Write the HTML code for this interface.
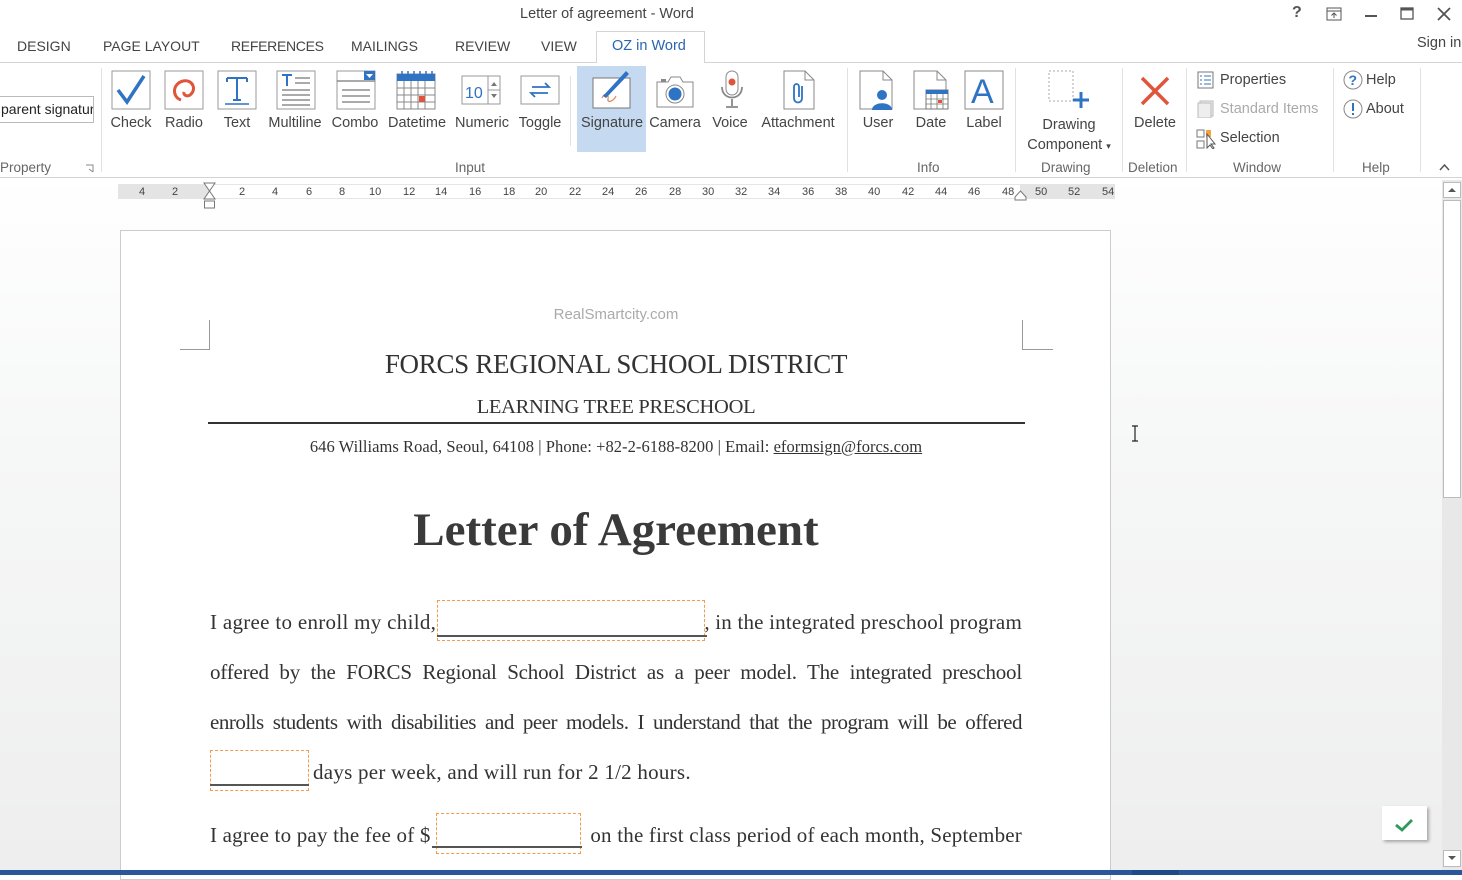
<!DOCTYPE html>
<html><head><meta charset="utf-8"><style>
*{margin:0;padding:0;box-sizing:border-box}
body{width:1462px;height:875px;overflow:hidden;position:relative;background:#fff;font-family:"Liberation Sans",sans-serif;color:#444}
.a{position:absolute;white-space:nowrap}
.tab{position:absolute;top:38px;font-size:14px;color:#444}
.lbl{position:absolute;top:115px;font-size:14.5px;color:#444;text-align:center}
.grp{position:absolute;top:160px;font-size:13.5px;color:#666}
.sep{position:absolute;top:68px;width:1px;height:104px;background:#e1e1e1}
.ic{position:absolute;top:70px}
.rn{position:absolute;top:186px;font-size:11px;color:#444}
.serif{font-family:"Liberation Serif",serif;color:#333}
.ln{position:absolute;left:210px;width:812px;font-family:"Liberation Serif",serif;font-size:21px;color:#333;text-align:justify;text-align-last:justify;white-space:nowrap;letter-spacing:-0.2px}
.pc{position:absolute;font-family:"Liberation Serif",serif;font-size:21px;color:#333;white-space:nowrap;letter-spacing:-0.2px}
.fld{position:absolute;border:1.5px dashed #f39a4c}
.ul{position:absolute;height:1.5px;background:#555}
</style></head><body>
<div class="a" style="left:520px;top:6px;font-size:14.5px;color:#444">Letter of agreement - Word</div>
<div class="a" style="left:1292px;top:4px;font-size:16px;font-weight:bold;color:#555">?</div>
<svg class="a" style="left:1326px;top:7px" width="16" height="14"><rect x="1" y="1" width="14" height="12" fill="none" stroke="#555"/><path d="M1 4H15M8 11V6M5.5 8.5L8 6L10.5 8.5" stroke="#555" fill="none"/></svg>
<div class="a" style="left:1365px;top:15px;width:12px;height:2px;background:#555"></div>
<svg class="a" style="left:1400px;top:7px" width="14" height="13"><rect x="1" y="1" width="12" height="11" fill="none" stroke="#555" stroke-width="1.3"/><rect x="1" y="1" width="12" height="2.5" fill="#555"/></svg>
<svg class="a" style="left:1437px;top:7px" width="14" height="14"><path d="M1 1L13 13M13 1L1 13" stroke="#555" stroke-width="1.8"/></svg>

<div class="tab" style="left:17px">DESIGN</div>
<div class="tab" style="left:103px">PAGE LAYOUT</div>
<div class="tab" style="left:231px;letter-spacing:-0.3px">REFERENCES</div>
<div class="tab" style="left:351px">MAILINGS</div>
<div class="tab" style="left:455px">REVIEW</div>
<div class="tab" style="left:541px">VIEW</div>
<div class="a" style="left:596px;top:31px;width:109px;height:32px;border:1px solid #d4d4d4;border-bottom:none;background:#fff;z-index:2"></div>
<div class="tab" style="left:612px;color:#2b64b3;z-index:3;font-size:14.5px">OZ in Word</div>
<div class="a" style="left:1417px;top:35px;font-size:14.5px;color:#444">Sign in</div>
<div class="a" style="left:0;top:62px;width:1462px;height:1px;background:#d4d4d4"></div>
<div class="a" style="left:0;top:177px;width:1462px;height:1px;background:#d4d4d4"></div>

<div class="a" style="left:-2px;top:96px;width:96px;height:27px;border:1px solid #bbb;font-size:14px;color:#222;padding:4px 2px;overflow:hidden">parent signature</div>
<div class="grp" style="left:0">Property</div>
<svg class="a" style="left:85px;top:164px" width="9" height="9"><path d="M1 1H8V8M4 5L8 8" stroke="#888" fill="none"/></svg>
<div class="sep" style="left:101px"></div>

<div class="a" style="left:577px;top:66px;width:69px;height:86px;background:#c5d9f1"></div>

<svg class="ic" style="left:111px" width="40" height="40"><rect x="1" y="1" width="38" height="38" fill="#fff" stroke="#999"/><path d="M7 20L16 32L33 6" stroke="#2f73c4" stroke-width="3.5" fill="none"/></svg>
<svg class="ic" style="left:164px" width="40" height="40"><rect x="1" y="1" width="38" height="38" fill="#fff" stroke="#999"/><path d="M17 30C8 27 8 14 19 11C29 9 33 20 26 25C23 27 19 25 20 22" stroke="#e0553a" stroke-width="3" fill="none"/></svg>
<svg class="ic" style="left:217px" width="40" height="40"><rect x="1" y="1" width="38" height="38" fill="#fff" stroke="#999"/><path d="M10 8H30M20 8V30M16 30H24M10 8V12M30 8V12" stroke="#2f73c4" stroke-width="2" fill="none"/><path d="M8 34H32" stroke="#2f73c4" stroke-width="1.5"/></svg>
<svg class="ic" style="left:276px" width="40" height="40"><rect x="1" y="1" width="38" height="38" fill="#fff" stroke="#999"/><path d="M6 5H16M11 5V16" stroke="#2f73c4" stroke-width="2"/><path d="M19 8H34M19 13H34M6 20H34M6 25H34M6 30H34M6 35H34" stroke="#777" stroke-width="1.3"/></svg>
<svg class="ic" style="left:336px" width="40" height="40"><rect x="1" y="1" width="38" height="38" fill="#fff" stroke="#999"/><rect x="28" y="1" width="11" height="9" fill="#2f73c4"/><path d="M30 4L33.5 8L37 4Z" fill="#fff"/><path d="M1 11H39M6 20H34M6 26H34M6 32H34" stroke="#777" stroke-width="1.3"/></svg>
<svg class="ic" style="left:396px" width="40" height="40"><rect x="1" y="4" width="38" height="35" fill="#fff" stroke="#888"/><rect x="1" y="4" width="38" height="7" fill="#2f73c4"/><path d="M6 1V7M12 1V7M18 1V7M24 1V7M30 1V7M36 1V7" stroke="#2f73c4" stroke-width="1.5"/><path d="M1 18H39M1 25H39M1 32H39M8 11V39M15 11V39M22 11V39M29 11V39" stroke="#888"/><rect x="23" y="26" width="6" height="6" fill="#e0553a"/></svg>
<svg class="ic" style="left:461px" width="40" height="40"><rect x="1" y="6" width="38" height="28" fill="#fff" stroke="#999"/><text x="4" y="28" font-size="16" fill="#2f73c4" font-family="Liberation Sans">10</text><path d="M27 6V34M27 20H39" stroke="#999"/><path d="M30 16L33 12L36 16ZM30 24L33 28L36 24Z" fill="#777"/></svg>
<svg class="ic" style="left:520px" width="40" height="40"><rect x="1" y="6" width="38" height="28" fill="#fff" stroke="#999"/><path d="M12 17H29L25 13M28 23H11L15 27" stroke="#2f73c4" stroke-width="1.8" fill="none"/></svg>
<svg class="ic" style="left:591px" width="42" height="40"><rect x="2" y="8" width="37" height="30" fill="#fff" stroke="#777"/><path d="M11 28C14 22 18 24 17 29C16 33 22 32 25 26" stroke="#e58a5a" stroke-width="1.3" fill="none"/><path d="M12 26L35 1L38 4L15 28Z" fill="#2f73c4"/></svg>
<svg class="ic" style="left:654px" width="42" height="40"><path d="M3 12H14L17 7H26L29 12H39V37H3Z" fill="#fff" stroke="#888"/><rect x="7" y="9" width="5" height="3" fill="#888"/><circle cx="21" cy="24" r="9" fill="#fff" stroke="#888"/><circle cx="21" cy="24" r="6.5" fill="#2f73c4"/></svg>
<svg class="ic" style="left:718px" width="28" height="40"><rect x="8" y="1" width="12" height="24" rx="6" fill="#fff" stroke="#888"/><circle cx="14" cy="12" r="3.5" fill="#e0553a"/><path d="M4 17C4 31 24 31 24 17M14 29V36M8 37H20" stroke="#888" stroke-width="1.8" fill="none"/></svg>
<svg class="ic" style="left:783px" width="32" height="40"><path d="M1 1H22L31 10V39H1Z" fill="#fff" stroke="#888"/><path d="M22 1V10H31" fill="none" stroke="#888"/><path d="M19 16V28C19 34 11 34 11 28V17C11 13 16 13 16 17V27" stroke="#2f73c4" stroke-width="1.8" fill="none"/></svg>
<div class="lbl" style="left:108px;width:46px">Check</div>
<div class="lbl" style="left:161px;width:46px">Radio</div>
<div class="lbl" style="left:214px;width:46px">Text</div>
<div class="lbl" style="left:262px;width:66px">Multiline</div>
<div class="lbl" style="left:327px;width:56px">Combo</div>
<div class="lbl" style="left:384px;width:66px">Datetime</div>
<div class="lbl" style="left:450px;width:64px">Numeric</div>
<div class="lbl" style="left:514px;width:52px">Toggle</div>
<div class="lbl" style="left:578px;width:68px">Signature</div>
<div class="lbl" style="left:646px;width:58px">Camera</div>
<div class="lbl" style="left:706px;width:48px">Voice</div>
<div class="lbl" style="left:756px;width:84px">Attachment</div>
<div class="sep" style="left:570px;top:76px;height:70px"></div>
<div class="grp" style="left:455px">Input</div>
<div class="sep" style="left:847px"></div>

<svg class="ic" style="left:859px" width="36" height="40"><path d="M1 1H24L33 10V39H1Z" fill="#fff" stroke="#888"/><path d="M24 1V10H33" fill="none" stroke="#888"/><circle cx="23" cy="25" r="5" fill="#2f73c4"/><path d="M13 40C13 31 33 31 33 40Z" fill="#2f73c4"/></svg>
<svg class="ic" style="left:913px" width="36" height="40"><path d="M1 1H24L33 10V39H1Z" fill="#fff" stroke="#888"/><path d="M24 1V10H33" fill="none" stroke="#888"/><rect x="13" y="20" width="22" height="19" fill="#fff" stroke="#777"/><rect x="13" y="20" width="22" height="4" fill="#2f73c4"/><path d="M13 29H35M13 34H35M18 24V39M24 24V39M30 24V39" stroke="#777" stroke-width=".8"/><rect x="25" y="30" width="4" height="3" fill="#e0553a"/></svg>
<svg class="ic" style="left:964px" width="40" height="40"><rect x="1" y="1" width="38" height="38" fill="#fff" stroke="#888"/><text x="7" y="33" font-size="34" fill="#2f73c4" font-family="Liberation Sans">A</text></svg>
<div class="lbl" style="left:858px;width:40px">User</div>
<div class="lbl" style="left:910px;width:42px">Date</div>
<div class="lbl" style="left:962px;width:44px">Label</div>
<div class="grp" style="left:917px">Info</div>
<div class="sep" style="left:1015px"></div>

<svg class="ic" style="left:1048px" width="42" height="40"><rect x="1" y="1" width="24" height="30" fill="none" stroke="#aaa" stroke-dasharray="2 2"/><path d="M33 22V38M25 30H41" stroke="#2f73c4" stroke-width="3"/></svg>
<div class="lbl" style="left:1024px;width:90px;line-height:20px">Drawing<br>Component <span style="font-size:9px">▾</span></div>
<div class="grp" style="left:1041px">Drawing</div>
<div class="sep" style="left:1122px"></div>
<svg class="ic" style="left:1140px;top:76px" width="30" height="30"><path d="M2 2L28 28M28 2L2 28" stroke="#e0553a" stroke-width="3.5"/></svg>
<div class="lbl" style="left:1128px;width:54px">Delete</div>
<div class="grp" style="left:1128px">Deletion</div>
<div class="sep" style="left:1186px"></div>

<svg class="a" style="left:1197px;top:71px" width="18" height="18"><rect x="1" y="1" width="15" height="16" fill="#fff" stroke="#777"/><path d="M3 5H5M7 5H14M3 9H5M7 9H14M3 13H5M7 13H14" stroke="#2f73c4"/></svg>
<div class="a" style="left:1220px;top:72px;font-size:14.5px;color:#444">Properties</div>
<svg class="a" style="left:1197px;top:100px" width="18" height="18"><rect x="3" y="1" width="13" height="15" fill="#eee" stroke="#bbb"/><rect x="1" y="3" width="13" height="15" fill="#eee" stroke="#bbb"/></svg>
<div class="a" style="left:1220px;top:101px;font-size:14.5px;color:#aaa">Standard Items</div>
<svg class="a" style="left:1196px;top:129px" width="20" height="20"><rect x="1" y="1" width="7" height="7" fill="none" stroke="#777"/><rect x="1" y="12" width="7" height="7" fill="none" stroke="#777"/><rect x="10" y="1" width="5" height="7" fill="#f5a340"/><path d="M11 5V19L14 16L17 20L18 19L15 15H19Z" fill="#fff" stroke="#555"/></svg>
<div class="a" style="left:1220px;top:130px;font-size:14.5px;color:#444">Selection</div>
<div class="grp" style="left:1233px">Window</div>
<div class="sep" style="left:1333px"></div>
<svg class="a" style="left:1343px;top:70px" width="20" height="20"><circle cx="10" cy="10" r="9" fill="#fff" stroke="#888"/><text x="5.5" y="15" font-size="14" fill="#2f73c4" font-family="Liberation Sans" font-weight="bold">?</text></svg>
<div class="a" style="left:1366px;top:72px;font-size:14.5px;color:#444">Help</div>
<svg class="a" style="left:1343px;top:99px" width="20" height="20"><circle cx="10" cy="10" r="9" fill="#fff" stroke="#888"/><path d="M10 4V12M10 14V16" stroke="#2f73c4" stroke-width="2"/></svg>
<div class="a" style="left:1366px;top:101px;font-size:14.5px;color:#444">About</div>
<div class="grp" style="left:1362px">Help</div>
<div class="sep" style="left:1420px"></div>
<svg class="a" style="left:1439px;top:163px" width="11" height="8"><path d="M1 7L5.5 2L10 7" stroke="#555" stroke-width="1.5" fill="none"/></svg>

<div class="a" style="left:0;top:178px;width:1442px;height:692px;background:linear-gradient(#fff,#fdfdfd 8%,#f6f7f7 40%,#eeeeee)"></div>
<div class="a" style="left:118px;top:184px;width:997px;height:15px;background:#fff;border-top:1px solid #e6e6e6;border-bottom:1px solid #e6e6e6"></div>
<div class="a" style="left:118px;top:184px;width:91px;height:15px;background:#e4e4e4"></div>
<div class="a" style="left:1020px;top:184px;width:95px;height:15px;background:#e4e4e4"></div>
<div class="rn" style="left:139px">4</div><div class="rn" style="left:172px">2</div>
<div class="rn" style="left:239px">2</div><div class="rn" style="left:272px">4</div><div class="rn" style="left:306px">6</div><div class="rn" style="left:339px">8</div>
<div class="rn" style="left:369px">10</div><div class="rn" style="left:403px">12</div><div class="rn" style="left:435px">14</div><div class="rn" style="left:469px">16</div><div class="rn" style="left:503px">18</div><div class="rn" style="left:535px">20</div><div class="rn" style="left:569px">22</div><div class="rn" style="left:602px">24</div><div class="rn" style="left:635px">26</div><div class="rn" style="left:669px">28</div><div class="rn" style="left:702px">30</div><div class="rn" style="left:735px">32</div><div class="rn" style="left:768px">34</div><div class="rn" style="left:802px">36</div><div class="rn" style="left:835px">38</div><div class="rn" style="left:868px">40</div><div class="rn" style="left:902px">42</div><div class="rn" style="left:935px">44</div><div class="rn" style="left:968px">46</div><div class="rn" style="left:1002px">48</div><div class="rn" style="left:1035px">50</div><div class="rn" style="left:1068px">52</div><div class="rn" style="left:1102px">54</div>
<svg class="a" style="left:203px;top:182px" width="13" height="27"><path d="M1 1H12L6.5 9Z M1 17H12L6.5 9Z" fill="#fff" stroke="#777"/><rect x="1.5" y="19" width="10" height="7" fill="#fff" stroke="#777"/></svg>
<svg class="a" style="left:1014px;top:190px" width="13" height="11"><path d="M1 10H12V7L6.5 1L1 7Z" fill="#fff" stroke="#777"/></svg>

<div class="a" style="left:1442px;top:180px;width:20px;height:690px;background:#e8e8e8"></div>
<div class="a" style="left:1443px;top:182px;width:18px;height:16px;background:#fff;border:1px solid #bbb"></div>
<svg class="a" style="left:1447px;top:187px" width="10" height="6"><path d="M1 5L5 1L9 5Z" fill="#555"/></svg>
<div class="a" style="left:1443px;top:200px;width:18px;height:298px;background:#fff;border:1px solid #bbb"></div>
<div class="a" style="left:1443px;top:850px;width:18px;height:17px;background:#fff;border:1px solid #bbb"></div>
<svg class="a" style="left:1447px;top:855px" width="10" height="6"><path d="M1 1L5 5L9 1Z" fill="#555"/></svg>

<div class="a" style="left:120px;top:230px;width:991px;height:650px;background:#fff;border:1px solid #ccc"></div>
<div class="a" style="left:180px;top:320px;width:30px;height:30px;border-right:1px solid #999;border-bottom:1px solid #999"></div>
<div class="a" style="left:1022px;top:320px;width:31px;height:30px;border-left:1px solid #999;border-bottom:1px solid #999"></div>
<div class="a" style="left:416px;top:306px;width:400px;text-align:center;font-size:15px;color:#aaa">RealSmartcity.com</div>
<div class="a serif" style="left:216px;top:349px;width:800px;text-align:center;font-size:27px;letter-spacing:-0.3px">FORCS REGIONAL SCHOOL DISTRICT</div>
<div class="a serif" style="left:216px;top:396px;width:800px;text-align:center;font-size:20.5px;letter-spacing:-0.3px">LEARNING TREE PRESCHOOL</div>
<div class="a" style="left:208px;top:422px;width:817px;height:1.5px;background:#333"></div>
<div class="a serif" style="left:216px;top:437px;width:800px;text-align:center;font-size:16.5px;letter-spacing:0.05px">646 Williams Road, Seoul, 64108 | Phone: +82-2-6188-8200 | Email: <u>eformsign@forcs.com</u></div>
<div class="a serif" style="left:216px;top:503px;width:800px;text-align:center;font-size:47px;font-weight:bold;letter-spacing:0px;color:#3a3a3a">Letter of Agreement</div>

<div class="pc" style="left:210px;top:610px;letter-spacing:0.3px">I agree to enroll my child,</div>
<div class="pc" style="left:680px;top:610px;width:342px;text-align:right;letter-spacing:0.2px">, in the integrated preschool program</div>
<div class="fld" style="left:437px;top:600px;width:268px;height:41px"></div>
<div class="ul" style="left:437px;top:635px;width:270px"></div>
<div class="ln" style="top:660px">offered by the FORCS Regional School District as a peer model. The integrated preschool</div>
<div class="ln" style="top:710px;letter-spacing:-0.5px">enrolls students with disabilities and peer models. I understand that the program will be offered</div>
<div class="pc" style="left:313px;top:760px;letter-spacing:0.25px">days per week, and will run for 2 1/2 hours.</div>
<div class="fld" style="left:210px;top:750px;width:99px;height:41px"></div>
<div class="ul" style="left:210px;top:784px;width:99px"></div>
<div class="pc" style="left:210px;top:823px;letter-spacing:0.2px">I agree to pay the fee of $</div>
<div class="pc" style="left:540px;top:823px;width:482px;text-align:right;letter-spacing:0.2px">on the first class period of each month, September</div>
<div class="fld" style="left:436px;top:813px;width:145px;height:41px"></div>
<div class="ul" style="left:432px;top:846px;width:150px"></div>

<svg class="a" style="left:1130px;top:425px" width="10" height="17"><path d="M2 1H8M5 1V16M2 16H8" stroke="#222" stroke-width="1.2"/></svg>
<div class="a" style="left:1382px;top:806px;width:45px;height:34px;background:#fff;box-shadow:2px 2px 3px rgba(0,0,0,.3)"></div>
<svg class="a" style="left:1394px;top:818px" width="20" height="14"><path d="M2 7L8 12L18 2" stroke="#2e9a5a" stroke-width="2.8" fill="none"/></svg>

<div class="a" style="left:0;top:870px;width:1462px;height:5px;background:#2b579a"></div>
<div class="a" style="left:1132px;top:870px;width:47px;height:5px;background:#1e4a8a"></div>
</body></html>
